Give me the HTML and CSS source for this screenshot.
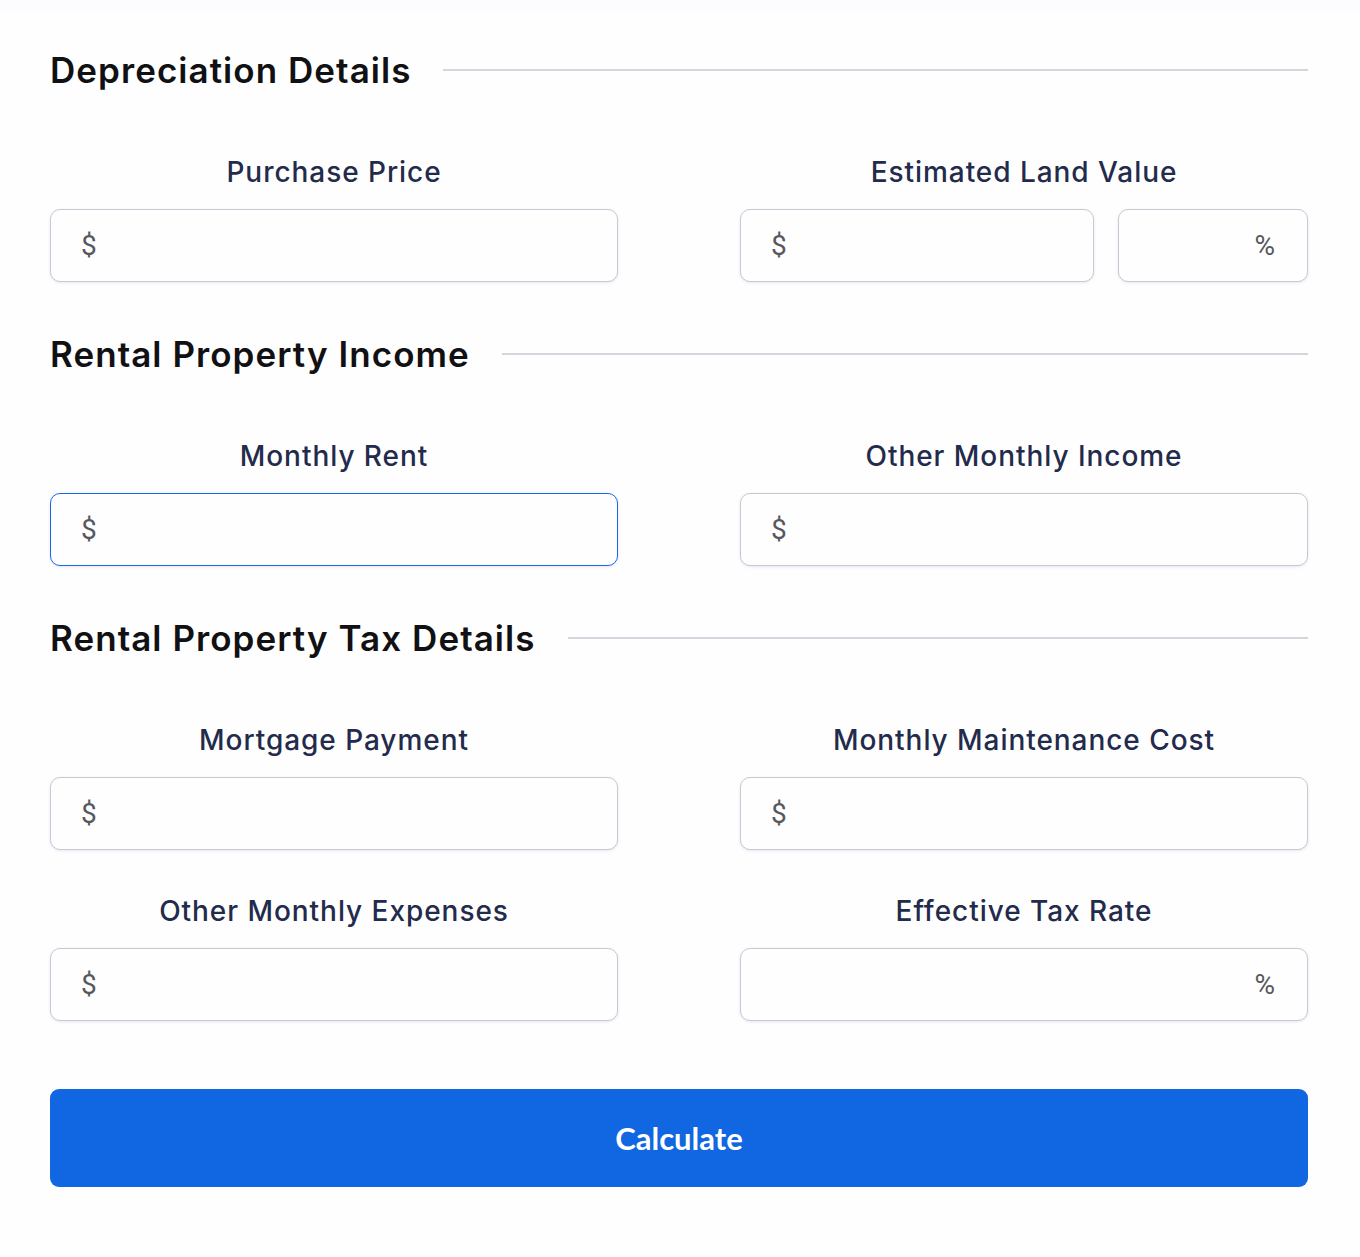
FILE: index.html
```html
<!DOCTYPE html>
<html lang="en">
<head>
<meta charset="utf-8">
<title>Rental Property Calculator</title>
<link rel="stylesheet" href="styles.css">
</head>
<body>
<div class="topband"></div>
<form class="calc">
  <section class="section">
    <div class="sec-head"><h2>Depreciation Details</h2><span class="rule"></span></div>
    <div class="grid">
      <div class="field">
        <label>Purchase Price</label>
        <div class="input"><span class="pre">$</span></div>
      </div>
      <div class="field">
        <label>Estimated Land Value</label>
        <div class="split">
          <div class="input"><span class="pre">$</span></div>
          <div class="input pct"><span class="suf">%</span></div>
        </div>
      </div>
    </div>
  </section>
  <section class="section">
    <div class="sec-head"><h2>Rental Property Income</h2><span class="rule"></span></div>
    <div class="grid">
      <div class="field">
        <label>Monthly Rent</label>
        <div class="input focus"><span class="pre">$</span></div>
      </div>
      <div class="field">
        <label>Other Monthly Income</label>
        <div class="input"><span class="pre">$</span></div>
      </div>
    </div>
  </section>
  <section class="section">
    <div class="sec-head"><h2>Rental Property Tax Details</h2><span class="rule"></span></div>
    <div class="grid">
      <div class="field">
        <label>Mortgage Payment</label>
        <div class="input"><span class="pre">$</span></div>
      </div>
      <div class="field">
        <label>Monthly Maintenance Cost</label>
        <div class="input"><span class="pre">$</span></div>
      </div>
      <div class="field">
        <label>Other Monthly Expenses</label>
        <div class="input"><span class="pre">$</span></div>
      </div>
      <div class="field">
        <label>Effective Tax Rate</label>
        <div class="input right"><span class="suf">%</span></div>
      </div>
    </div>
  </section>
  <button type="button" class="btn">Calculate</button>
</form>
</body>
</html>
```
FILE: styles.css
```css
html, body {
  margin: 0;
  padding: 0;
  background: #fefefe;
}
body {
  font-family: Inter, "Noto Sans", sans-serif;
  min-height: 1257px;
}
.topband {
  height: 12px;
  background: #fcfbfe;
}
.calc {
  width: 1258px;
  margin: 38px 0 0 50px;
  display: flex;
  flex-direction: column;
}
.section {
  display: flex;
  flex-direction: column;
  margin-bottom: 52px;
}
.section:last-of-type {
  margin-bottom: 68px;
}
.sec-head {
  height: 40px;
  display: flex;
  align-items: center;
  gap: 32px;
  margin-bottom: 67px;
}
.sec-head h2 {
  margin: 0;
  font-size: 35px;
  font-weight: 600;
  color: #111114;
  white-space: nowrap;
  letter-spacing: 1.05px;
}
.rule {
  flex: 1;
  height: 2px;
  background: #d4d5dd;
}
.grid {
  display: grid;
  grid-template-columns: 568px 568px;
  column-gap: 122px;
  row-gap: 46px;
}
.field {
  display: flex;
  flex-direction: column;
  gap: 22px;
}
.field label {
  height: 30px;
  line-height: 30px;
  text-align: center;
  font-size: 28px;
  font-weight: 500;
  color: #232b4c;
  letter-spacing: 0.95px;
  white-space: nowrap;
}
.split {
  display: flex;
  gap: 24px;
}
.split .input {
  flex: 0 0 354px;
}
.split .input.pct {
  flex: 0 0 190px;
  justify-content: flex-end;
}
.input {
  box-sizing: border-box;
  height: 73px;
  border: 1.5px solid #c8c8d2;
  border-radius: 10px;
  background: #fefeff;
  box-shadow: 0 1px 3px rgba(200, 205, 230, 0.45);
  display: flex;
  align-items: center;
  padding: 0 32px 0 30px;
  font-family: Roboto, "Liberation Sans", sans-serif;
  font-size: 28px;
  font-weight: 400;
  color: #58585c;
}
.input.right {
  justify-content: flex-end;
}
.input.focus {
  border-color: #1a66ea;
}
.btn {
  height: 98px;
  width: 100%;
  border: none;
  border-radius: 9px;
  background: #1166e2;
  color: #ffffff;
  font-family: Lato, sans-serif;
  font-size: 31px;
  font-weight: 700;
  cursor: pointer;
}
```
